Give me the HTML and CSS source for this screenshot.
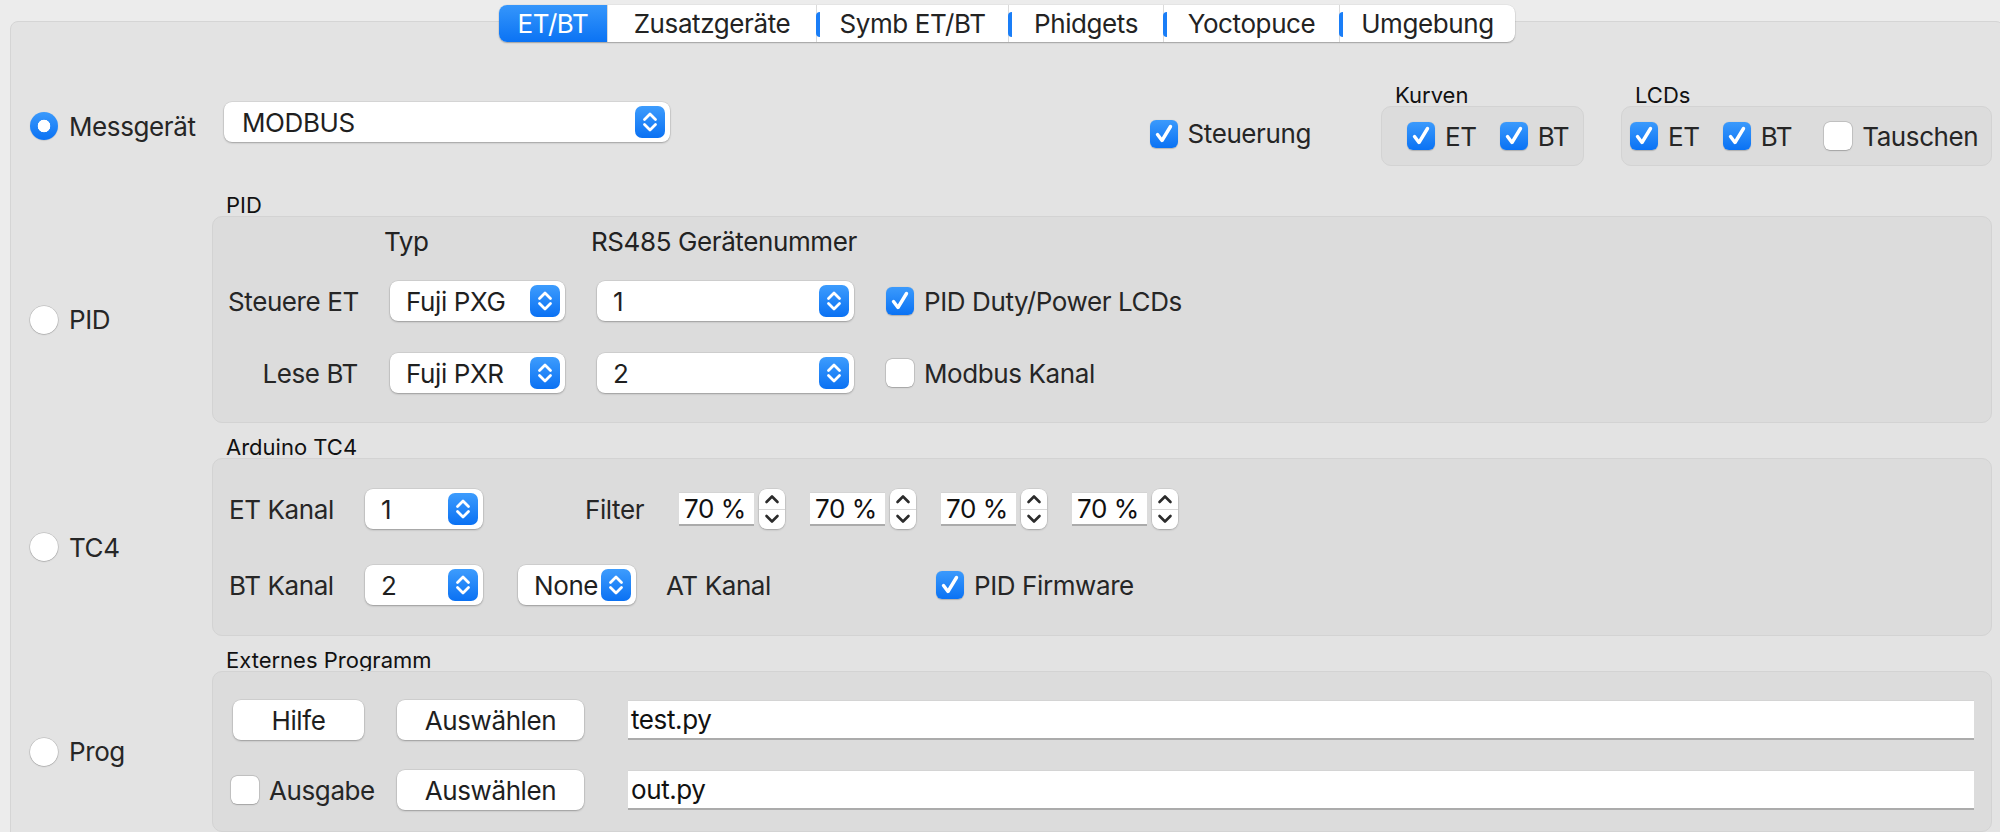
FILE: index.html
```html
<!DOCTYPE html>
<html lang="de">
<head>
<meta charset="utf-8">
<title>Geräte</title>
<link rel="stylesheet" href="styles.css">
</head>
<body>
<svg class="defs" width="0" height="0" aria-hidden="true">
  <symbol id="updown" viewBox="0 0 30 32">
    <path d="M9.5 13.5 L15 8 L20.5 13.5" fill="none" stroke="#fff" stroke-width="2.8" stroke-linecap="round" stroke-linejoin="round"/>
    <path d="M9.5 18.5 L15 24 L20.5 18.5" fill="none" stroke="#fff" stroke-width="2.8" stroke-linecap="round" stroke-linejoin="round"/>
  </symbol>
  <symbol id="check" viewBox="0 0 28 28">
    <path d="M7.5 14.5 L12 20.5 L20.5 6.5" fill="none" stroke="#fff" stroke-width="3.4" stroke-linecap="round" stroke-linejoin="round"/>
  </symbol>
  <symbol id="spin" viewBox="0 0 26 40">
    <path d="M7.5 13 L13 7.5 L18.5 13" fill="none" stroke="#2b2b2b" stroke-width="2.6" stroke-linecap="round" stroke-linejoin="round"/>
    <path d="M7.5 27 L13 32.5 L18.5 27" fill="none" stroke="#2b2b2b" stroke-width="2.6" stroke-linecap="round" stroke-linejoin="round"/>
  </symbol>
</svg>

<div class="window">
  <div class="tabbar">
    <div class="tab active w1">ET/BT</div>
    <div class="tab w2">Zusatzgeräte</div>
    <div class="tab mark w3">Symb ET/BT</div>
    <div class="tab mark w4">Phidgets</div>
    <div class="tab mark w5">Yoctopuce</div>
    <div class="tab mark w6">Umgebung</div>
  </div>

  <div class="panel">
    <div class="toprow">
      <div class="radio-item first"><span class="radio on"></span><span>Messgerät</span></div>
      <div class="combo combo-modbus"><span class="ctext">MODBUS</span><svg class="arrows"><use href="#updown"/></svg></div>
      <div class="check-item steuerung"><span class="cb on"><svg><use href="#check"/></svg></span><span>Steuerung</span></div>
      <div class="mini kurven">
        <div class="mini-title">Kurven</div>
        <div class="mini-box">
          <div class="check-item"><span class="cb on"><svg><use href="#check"/></svg></span><span>ET</span></div>
          <div class="check-item"><span class="cb on"><svg><use href="#check"/></svg></span><span>BT</span></div>
        </div>
      </div>
      <div class="mini lcds">
        <div class="mini-title">LCDs</div>
        <div class="mini-box">
          <div class="check-item"><span class="cb on"><svg><use href="#check"/></svg></span><span>ET</span></div>
          <div class="check-item"><span class="cb on"><svg><use href="#check"/></svg></span><span>BT</span></div>
          <div class="check-item tauschen"><span class="cb"></span><span>Tauschen</span></div>
        </div>
      </div>
    </div>

    <section class="sect first-sect">
      <div class="sect-radio"><span class="radio"></span><span>PID</span></div>
      <div class="sect-title">PID</div>
      <div class="box pid">
        <div class="pid-row hdr">
          <span></span>
          <span class="hcell">Typ</span>
          <span class="hcell">RS485 Gerätenummer</span>
          <span></span>
        </div>
        <div class="pid-row r1">
          <span class="rlabel">Steuere ET</span>
          <div class="combo"><span class="ctext">Fuji PXG</span><svg class="arrows"><use href="#updown"/></svg></div>
          <div class="combo"><span class="ctext">1</span><svg class="arrows"><use href="#updown"/></svg></div>
          <div class="check-item"><span class="cb on"><svg><use href="#check"/></svg></span><span>PID Duty/Power LCDs</span></div>
        </div>
        <div class="pid-row r2">
          <span class="rlabel">Lese BT</span>
          <div class="combo"><span class="ctext">Fuji PXR</span><svg class="arrows"><use href="#updown"/></svg></div>
          <div class="combo"><span class="ctext">2</span><svg class="arrows"><use href="#updown"/></svg></div>
          <div class="check-item"><span class="cb"></span><span>Modbus Kanal</span></div>
        </div>
      </div>
    </section>

    <section class="sect">
      <div class="sect-radio"><span class="radio"></span><span>TC4</span></div>
      <div class="sect-title">Arduino TC4</div>
      <div class="box tc4">
        <div class="tc-row">
          <span class="tlabel">ET Kanal</span>
          <div class="combo small"><span class="ctext">1</span><svg class="arrows"><use href="#updown"/></svg></div>
          <span class="filter-label">Filter</span>
          <div class="spinbox"><span class="field num">70 %</span><span class="spinner"><svg><use href="#spin"/></svg></span></div>
          <div class="spinbox"><span class="field num">70 %</span><span class="spinner"><svg><use href="#spin"/></svg></span></div>
          <div class="spinbox"><span class="field num">70 %</span><span class="spinner"><svg><use href="#spin"/></svg></span></div>
          <div class="spinbox"><span class="field num">70 %</span><span class="spinner"><svg><use href="#spin"/></svg></span></div>
        </div>
        <div class="tc-row r2">
          <span class="tlabel">BT Kanal</span>
          <div class="combo small"><span class="ctext">2</span><svg class="arrows"><use href="#updown"/></svg></div>
          <div class="combo small none"><span class="ctext">None</span><svg class="arrows"><use href="#updown"/></svg></div>
          <span class="at-label">AT Kanal</span>
          <div class="check-item"><span class="cb on"><svg><use href="#check"/></svg></span><span>PID Firmware</span></div>
        </div>
      </div>
    </section>

    <section class="sect">
      <div class="sect-radio"><span class="radio"></span><span>Prog</span></div>
      <div class="sect-title">Externes Programm</div>
      <div class="box prog">
        <div class="pg-row">
          <div class="col1"><span class="button hilfe">Hilfe</span></div>
          <span class="button choose">Auswählen</span>
          <span class="field path">test.py</span>
        </div>
        <div class="pg-row r2">
          <div class="col1"><div class="check-item ausgabe"><span class="cb"></span><span>Ausgabe</span></div></div>
          <span class="button choose">Auswählen</span>
          <span class="field path">out.py</span>
        </div>
      </div>
    </section>
  </div>
</div>
</body>
</html>
```

FILE: styles.css
```css
* { box-sizing: border-box; }

html {
  margin: 0;
  padding: 0;
  height: 832px;
  overflow: hidden;
}

body {
  margin: 0;
  padding: 0;
  width: 2000px;
  height: 832px;
  overflow: hidden;
  background: #ececec;
  font-family: Inter, "Noto Sans", sans-serif;
  font-size: 26px;
  letter-spacing: -0.4px;
  color: #262626;
}

.defs {
  position: absolute;
  width: 0;
  height: 0;
  overflow: hidden;
}

.window {
  width: 2004px;
  height: 832px;
  overflow: hidden;
  padding: 5px 0 0 10px;
}

/* ---------- tabs ---------- */
.tabbar {
  position: relative;
  z-index: 2;
  display: flex;
  width: 1016px;
  height: 37px;
  margin: 0 auto -21px auto;
  background: #fff;
  border-radius: 8px;
  box-shadow: 0 1px 1.5px rgba(0, 0, 0, 0.28), 0 0 0 0.5px rgba(0, 0, 0, 0.06);
}

.tab {
  position: relative;
  height: 37px;
  line-height: 37px;
  text-align: center;
  color: #232323;
  border-left: 1px solid #dadada;
  white-space: nowrap;
}

.tab.active {
  border-left: none;
  color: #fff;
  border-radius: 8px 0 0 8px;
  background: linear-gradient(#3596fb, #0b73f4);
}

.mark::before {
  content: "";
  position: absolute;
  left: -1px;
  top: 7px;
  bottom: 5px;
  width: 4px;
  border-radius: 5px 0 0 5px;
  background: #1a7ef7;
}

.w1 { width: 108px; }
.w2 { width: 209px; }
.w3 { width: 192px; }
.w4 { width: 155px; }
.w5 { width: 176px; }
.w6 { width: 176px; }

/* ---------- panel ---------- */
.panel {
  width: 1994px;
  height: 820px;
  background: #e3e3e3;
  border: 1px solid #d5d5d5;
  border-radius: 8px;
  padding: 62px 11px 0 19px;
}

.toprow {
  display: flex;
  align-items: flex-start;
  height: 82px;
}

.radio-item,
.sect-radio {
  display: flex;
  align-items: center;
  gap: 11px;
  white-space: nowrap;
}

.first {
  width: 194px;
  height: 28px;
  margin-top: 28px;
}

.radio {
  flex: none;
  width: 28px;
  height: 28px;
  border-radius: 50%;
  background: #fff;
  box-shadow: 0 0 0 0.5px rgba(0, 0, 0, 0.18), 0 0.5px 1.5px rgba(0, 0, 0, 0.22);
}

.radio.on {
  background: radial-gradient(circle, #fff 0 6px, transparent 6.6px), linear-gradient(#3b9afc, #0a72f4);
  box-shadow: 0 0.5px 1px rgba(0, 0, 0, 0.2);
}

/* ---------- combos ---------- */
.combo {
  display: flex;
  align-items: center;
  justify-content: space-between;
  height: 40px;
  padding: 0 5px 0 16px;
  background: #fff;
  border-radius: 8px;
  box-shadow: 0 0 0 0.5px rgba(0, 0, 0, 0.1), 0 1px 2px rgba(0, 0, 0, 0.26);
  color: #1f1f1f;
  white-space: nowrap;
}

.combo-modbus {
  width: 446px;
  margin-top: 18px;
  padding-left: 18px;
}

.arrows {
  flex: none;
  width: 30px;
  height: 32px;
  border-radius: 7px;
  background: linear-gradient(#3d9cfd, #0a71f3);
}

/* ---------- checkboxes ---------- */
.check-item {
  display: flex;
  align-items: center;
  gap: 10px;
  white-space: nowrap;
}

.cb {
  flex: none;
  width: 28px;
  height: 28px;
  border-radius: 6px;
  background: #fff;
  box-shadow: 0 0 0 0.5px rgba(0, 0, 0, 0.2), 0 0.5px 1.5px rgba(0, 0, 0, 0.18);
}

.cb svg {
  display: block;
  width: 28px;
  height: 28px;
}

.cb.on {
  background: linear-gradient(#3b9afc, #0a72f4);
  box-shadow: 0 0.5px 1px rgba(0, 0, 0, 0.2);
}

.steuerung {
  margin-left: auto;
  margin-right: 70px;
  margin-top: 34px;
}

.mini-title {
  height: 22px;
  line-height: 22px;
  font-size: 22px;
  letter-spacing: 0;
  color: #111;
  padding-left: 14px;
}

.mini-box {
  display: flex;
  align-items: center;
  gap: 23px;
  height: 60px;
  background: #dcdcdc;
  border: 1px solid #d3d3d3;
  border-radius: 10px;
}

.kurven .mini-box {
  width: 203px;
  padding-left: 25px;
}

.lcds {
  margin-left: 37px;
}

.lcds .mini-box {
  width: 371px;
  padding-left: 8px;
}

.tauschen {
  margin-left: 9px;
}

/* ---------- sections ---------- */
.sect {
  display: grid;
  grid-template-columns: 182px 1fr;
  grid-template-rows: 22px auto;
  margin-top: 13px;
}

.first-sect {
  margin-top: 28px;
}

.sect-radio {
  grid-row: 2;
  grid-column: 1;
  align-self: center;
}

.sect-title {
  grid-row: 1;
  grid-column: 2;
  font-size: 22px;
  line-height: 22px;
  letter-spacing: 0;
  color: #111;
  padding-left: 14px;
  white-space: nowrap;
}

.box {
  grid-row: 2;
  grid-column: 2;
  background: #dcdcdc;
  border: 1px solid #d3d3d3;
  border-radius: 10px;
}

/* PID */
.pid {
  padding: 9px 0 29px 15px;
}

.pid-row {
  display: grid;
  grid-template-columns: 130px 175px 257px auto;
  column-gap: 32px;
  align-items: center;
  height: 40px;
}

.pid-row.hdr {
  height: 30px;
}

.pid-row.r1 { margin-top: 25px; }
.pid-row.r2 { margin-top: 32px; }

.hcell {
  margin-left: -6px;
  white-space: nowrap;
  color: #222;
}

.rlabel {
  text-align: right;
  white-space: nowrap;
}

/* TC4 */
.tc4 {
  padding: 30px 0 30px 16px;
}

.tc-row {
  display: flex;
  align-items: center;
  height: 40px;
}

.tc-row.r2 {
  margin-top: 36px;
}

.tlabel {
  width: 136px;
  white-space: nowrap;
}

.combo.small {
  width: 118px;
}

.filter-label {
  width: 94px;
  margin-left: 102px;
}

.spinbox {
  display: flex;
  align-items: center;
  gap: 5px;
  margin-right: 25px;
}

.field {
  display: block;
  background: #fff;
  border-top: 1px solid #d4d4d4;
  border-bottom: 2px solid #ababab;
  color: #111;
  white-space: nowrap;
}

.field.num {
  width: 75px;
  height: 34px;
  line-height: 31px;
  padding-left: 5px;
}

.spinner {
  display: block;
  width: 26px;
  height: 40px;
  border-radius: 8px;
  background: linear-gradient(#fff 0 49%, #d8d8d8 49% 53%, #fff 53%);
  box-shadow: 0 0 0 0.5px rgba(0, 0, 0, 0.1), 0 1px 2px rgba(0, 0, 0, 0.22);
}

.spinner svg {
  display: block;
  width: 26px;
  height: 40px;
}

.none {
  margin-left: 35px;
}

.at-label {
  width: 270px;
  margin-left: 30px;
  white-space: nowrap;
}

/* Prog */
.prog {
  padding: 28px 17px 21px 20px;
}

.pg-row {
  display: flex;
  align-items: center;
  height: 40px;
}

.pg-row.r2 {
  margin-top: 30px;
}

.col1 {
  width: 131px;
}

.button {
  display: flex;
  align-items: center;
  justify-content: center;
  height: 40px;
  background: #fff;
  border-radius: 8px;
  box-shadow: 0 0 0 0.5px rgba(0, 0, 0, 0.1), 0 1px 2px rgba(0, 0, 0, 0.26);
  color: #1f1f1f;
  white-space: nowrap;
}

.hilfe {
  width: 131px;
}

.choose {
  width: 187px;
  margin-left: 33px;
}

.ausgabe {
  margin-left: -2px;
}

.field.path {
  flex: 1;
  height: 40px;
  line-height: 37px;
  margin-left: 44px;
  padding-left: 3px;
}
```
